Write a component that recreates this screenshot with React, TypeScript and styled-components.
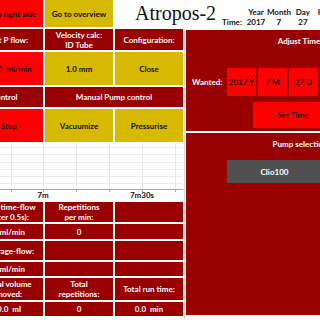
import React from "react";
import styled, { createGlobalStyle } from "styled-components";

type Tone = "dark" | "red" | "yellow" | "none";

const toneBg: Record<Tone, string> = {
  dark: "#990000",
  red: "#ff0000",
  yellow: "#d6b900",
  none: "transparent",
};

const toneFg: Record<Tone, string> = {
  dark: "#ffffff",
  red: "#111111",
  yellow: "#111111",
  none: "#111111",
};

const GlobalStyle = createGlobalStyle`
  html, body {
    margin: 0;
    padding: 0;
    background: #ffffff;
    overflow: hidden;
  }
  body {
    font-family: Lato, "Open Sans", sans-serif;
  }
`;

const Screen = styled.div`
  width: 520px;
  height: 320px;
  margin-left: -95px;
  display: flex;
  flex-direction: column;
`;

const Header = styled.div`
  display: flex;
  height: 27px;
  flex-shrink: 0;
`;

const NavButtons = styled.div`
  display: grid;
  grid-template-columns: repeat(3, 68px);
  gap: 2px;
  flex-shrink: 0;
`;

const Cell = styled.div<{ $tone: Tone; $span?: number }>`
  display: flex;
  align-items: center;
  justify-content: center;
  text-align: center;
  background: ${(p) => toneBg[p.$tone]};
  color: ${(p) => toneFg[p.$tone]};
  font-size: 8px;
  font-weight: 700;
  line-height: 1.25;
  white-space: pre;
  grid-column: span ${(p) => p.$span ?? 1};
`;

const Title = styled.div`
  margin-left: 22px;
  font-family: "Liberation Serif", serif;
  font-size: 20px;
  line-height: 27px;
  color: #111;
  white-space: nowrap;
  flex-shrink: 0;
`;

const TimeBlock = styled.div`
  display: flex;
  align-items: flex-end;
  margin-left: 6px;
  padding-top: 9px;
  font-size: 8px;
  font-weight: 700;
  line-height: 10px;
  color: #111;
  flex-shrink: 0;
`;

const TimeLabel = styled.div`
  margin-right: 3px;
`;

const TimeCol = styled.div<{ $w: number }>`
  width: ${(p) => p.$w}px;
  display: flex;
  flex-direction: column;
  align-items: center;
`;

const Body = styled.div`
  display: flex;
  margin-top: 2px;
`;

const LeftPane = styled.div`
  width: 278px;
  display: flex;
  flex-direction: column;
  flex-shrink: 0;
`;

const ControlGrid = styled.div`
  display: grid;
  grid-template-columns: repeat(4, 68px);
  grid-template-rows: 21px 33px 20px 33px;
  gap: 2px;
`;

const Chart = styled.svg`
  display: block;
  width: 278px;
  height: 58px;
`;

const StatsGrid = styled.div`
  display: grid;
  grid-template-columns: repeat(3, 68px);
  grid-template-rows: 20px 15px 19px 14px 22px 14px;
  gap: 2px;
  padding-left: 70px;
  margin-top: 2px;
`;

const Splitter = styled.div`
  width: 1px;
  height: 290px;
  margin: 0 1px;
  background: #d4d4d4;
  flex-shrink: 0;
`;

const RightPane = styled.div`
  width: 228px;
  margin-top: 1px;
  display: flex;
  flex-direction: column;
  gap: 2px;
  flex-shrink: 0;
`;

const Panel = styled.div<{ $h: number }>`
  height: ${(p) => p.$h}px;
  background: #990000;
  color: #fff;
  font-size: 8px;
  font-weight: 700;
  line-height: 10px;
  display: flex;
  flex-direction: column;
`;

const PanelTitle = styled.div`
  text-align: center;
  padding-top: 6px;
`;

const WantedRow = styled.div`
  display: flex;
  margin-top: 22px;
  padding-left: 6px;
  height: 28px;
  gap: 2px;
`;

const WantedLabel = styled.div`
  width: 33px;
  display: flex;
  align-items: center;
`;

const DateButton = styled.div`
  width: 29px;
  background: #ff0000;
  color: #111;
  display: flex;
  align-items: center;
  justify-content: center;
  white-space: nowrap;
`;

const SetTimeButton = styled.div`
  margin: 6px 0 0 67px;
  width: 80px;
  height: 26px;
  background: #ff0000;
  color: #111;
  display: flex;
  align-items: center;
  justify-content: center;
`;

const PumpOption = styled.div`
  margin: 11px 0 0 41px;
  width: 95px;
  height: 23px;
  background: #505050;
  color: #fff;
  display: flex;
  align-items: center;
  justify-content: center;
`;

const controls: { text: string; tone: Tone; span?: number }[] = [
  { text: "", tone: "none" },
  { text: "Set P flow:", tone: "dark" },
  { text: "Velocity calc:\nID Tube", tone: "dark" },
  { text: "Configuration:", tone: "dark" },
  { text: "", tone: "none" },
  { text: "10.0  ml/min", tone: "red" },
  { text: "1.0 mm", tone: "yellow" },
  { text: "Close", tone: "yellow" },
  { text: "Automatic Pump control", tone: "dark", span: 2 },
  { text: "Manual Pump control", tone: "dark", span: 2 },
  { text: "", tone: "none" },
  { text: "Stop", tone: "red" },
  { text: "Vacuumize", tone: "yellow" },
  { text: "Pressurise", tone: "yellow" },
];

const stats: string[] = [
  "Real-time-flow\n(after 0.5s):", "Repetitions\nper min:", "",
  "0 ml/min", "0", "",
  "Average-flow:", "", "",
  "0 ml/min", "", "",
  "Total volume\nmoved:", "Total\nrepetitions:", "Total run time:",
  "0.0  ml", "0", "0.0  min",
];

const ORIGIN = 95;
const hLines = [5, 12, 20, 27, 34, 41];
const vLines = [11, 43, 76, 109, 142, 175, -22, -55];

const FlowChart = () => (
  <Chart viewBox="0 0 278 58">
    {hLines.map((y) => (
      <line key={`h${y}`} x1={0} x2={278} y1={y + 0.5} y2={y + 0.5} stroke="#ececec" strokeWidth={1} />
    ))}
    {vLines.map((x) => (
      <line key={`v${x}`} x1={ORIGIN + x + 0.5} x2={ORIGIN + x + 0.5} y1={1} y2={50} stroke="#e6e6e6" strokeWidth={1} />
    ))}
    <line x1={0} x2={278} y1={47.5} y2={47.5} stroke="#a8a8a8" strokeWidth={1} />
    {vLines.map((x) => (
      <line key={`t${x}`} x1={ORIGIN + x + 0.5} x2={ORIGIN + x + 0.5} y1={47} y2={50} stroke="#a8a8a8" strokeWidth={1} />
    ))}
    <text x={ORIGIN + 43} y={56} textAnchor="middle" fontSize={8} fontWeight={700} fontFamily="Lato, sans-serif" fill="#111">
      7m
    </text>
    <text x={ORIGIN + 142} y={56} textAnchor="middle" fontSize={8} fontWeight={700} fontFamily="Lato, sans-serif" fill="#111">
      7m30s
    </text>
  </Chart>
);

export default function App() {
  return (
    <>
      <GlobalStyle />
      <Screen>
        <Header>
          <NavButtons>
            <Cell $tone="none" />
            <Cell $tone="red">Go to right side</Cell>
            <Cell $tone="yellow">Go to overview</Cell>
          </NavButtons>
          <Title>Atropos-2</Title>
          <TimeBlock>
            <TimeLabel>Time:</TimeLabel>
            <TimeCol $w={22}>
              <span>Year</span>
              <span>2017</span>
            </TimeCol>
            <TimeCol $w={24}>
              <span>Month</span>
              <span>7</span>
            </TimeCol>
            <TimeCol $w={24}>
              <span>Day</span>
              <span>27</span>
            </TimeCol>
            <TimeCol $w={24}>
              <span>Hour</span>
              <span>14</span>
            </TimeCol>
          </TimeBlock>
        </Header>
        <Body>
          <LeftPane>
            <ControlGrid>
              {controls.map((c, i) => (
                <Cell key={`c${i}`} $tone={c.tone} $span={c.span}>
                  {c.text}
                </Cell>
              ))}
            </ControlGrid>
            <FlowChart />
            <StatsGrid>
              {stats.map((s, i) => (
                <Cell key={`s${i}`} $tone="dark">
                  {s}
                </Cell>
              ))}
            </StatsGrid>
          </LeftPane>
          <Splitter />
          <RightPane>
            <Panel $h={101}>
              <PanelTitle>Adjust Time:</PanelTitle>
              <WantedRow>
                <WantedLabel>Wanted:</WantedLabel>
                <DateButton>2017 Y</DateButton>
                <DateButton>7 M</DateButton>
                <DateButton>27 D</DateButton>
                <DateButton>14 h</DateButton>
                <DateButton>30 m</DateButton>
              </WantedRow>
              <SetTimeButton>Set Time</SetTimeButton>
            </Panel>
            <Panel $h={182}>
              <PanelTitle>Pump selection</PanelTitle>
              <PumpOption>Clio100</PumpOption>
            </Panel>
          </RightPane>
        </Body>
      </Screen>
    </>
  );
}
